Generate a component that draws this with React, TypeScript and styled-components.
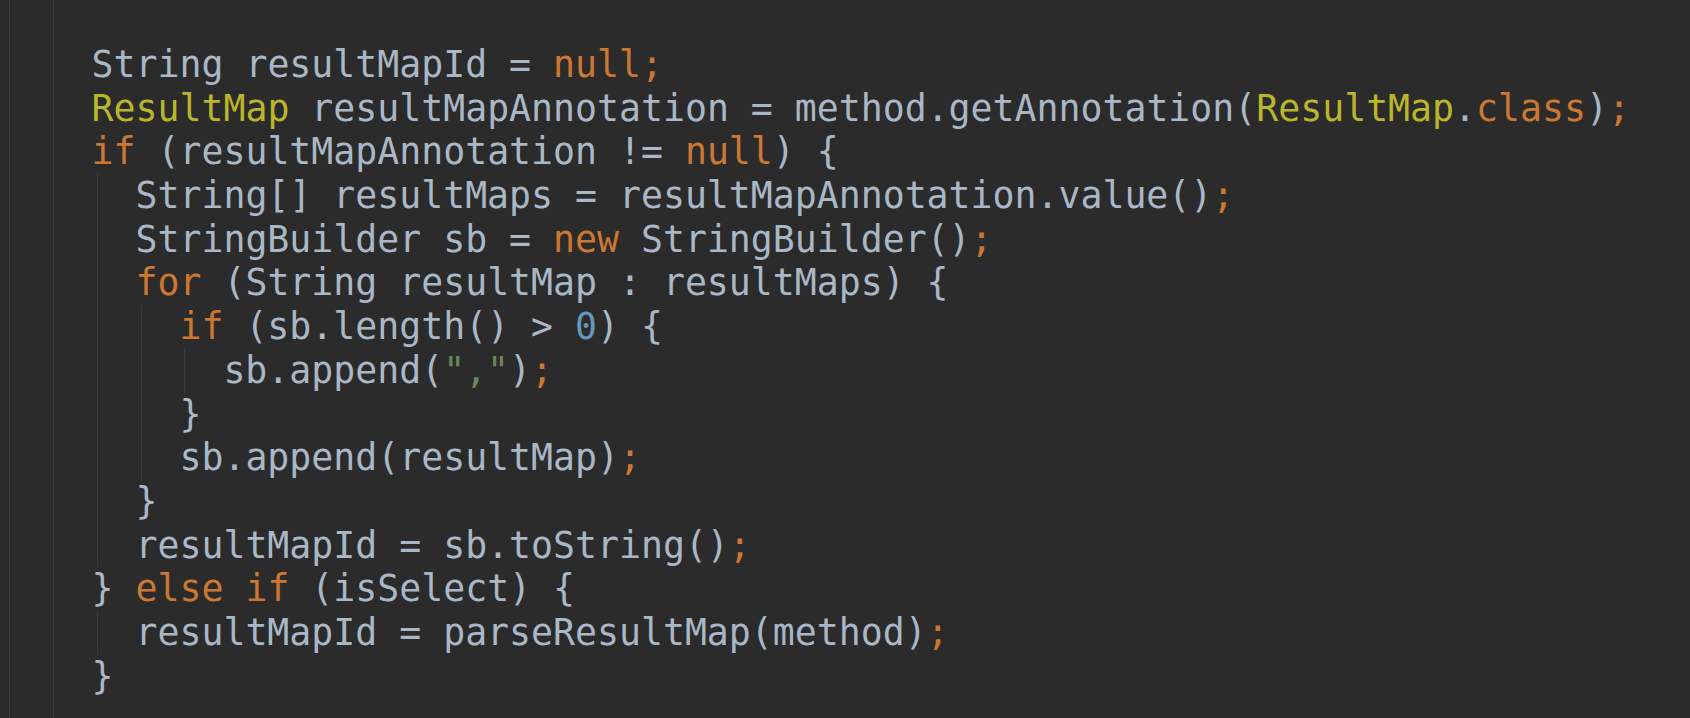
import React from "react";
import styled, { createGlobalStyle } from "styled-components";

const Global = createGlobalStyle`
  html, body { margin: 0; padding: 0; background: #2b2b2b; }
  #root { min-height: 100vh; }
`;

type Kind = "plain" | "kw" | "type" | "num" | "str";

const COLORS: Record<Kind, string> = {
  plain: "#a9b7c6",
  kw: "#cc7832",
  type: "#bbb529",
  num: "#6897bb",
  str: "#6a8759",
};

const GUIDE = "#3b3b3b";

const Editor = styled.div`
  box-sizing: border-box;
  height: 718px;
  overflow: hidden;
  padding: 43px 0 0 3.7px;
  display: flex;
  flex-direction: column;
  font-family: "DejaVu Sans Mono", "Liberation Mono", monospace;
  font-size: 36.5px;
  line-height: 43.7px;
  color: ${COLORS.plain};
  background:
    linear-gradient(${GUIDE}, ${GUIDE}) no-repeat 8.7px 0 / 1px 100%,
    linear-gradient(${GUIDE}, ${GUIDE}) no-repeat 52.7px 0 / 1px 100%,
    #2b2b2b;
`;

const Line = styled.div`
  display: flex;
  height: 43.7px;
  white-space: pre;
`;

const Margin = styled.span`
  width: 4ch;
  flex: none;
`;

const Indent = styled.span`
  width: 2ch;
  flex: none;
  background: linear-gradient(${GUIDE}, ${GUIDE}) no-repeat 5px 0 / 1px 100%;
`;

const Token = styled.span<{ $kind: Kind }>`
  color: ${(p) => COLORS[p.$kind]};
`;

type Tok = [string, Kind];
type Row = { indent: number; toks: Tok[] };

const p = (s: string): Tok => [s, "plain"];
const k = (s: string): Tok => [s, "kw"];
const t = (s: string): Tok => [s, "type"];
const n = (s: string): Tok => [s, "num"];
const str = (s: string): Tok => [s, "str"];

const rows: Row[] = [
  { indent: 0, toks: [p("String resultMapId = "), k("null;")] },
  {
    indent: 0,
    toks: [
      t("ResultMap"),
      p(" resultMapAnnotation = method.getAnnotation("),
      t("ResultMap"),
      p("."),
      k("class"),
      p(")"),
      k(";"),
    ],
  },
  { indent: 0, toks: [k("if"), p(" (resultMapAnnotation != "), k("null"), p(") {")] },
  { indent: 1, toks: [p("String[] resultMaps = resultMapAnnotation.value()"), k(";")] },
  { indent: 1, toks: [p("StringBuilder sb = "), k("new"), p(" StringBuilder()"), k(";")] },
  { indent: 1, toks: [k("for"), p(" (String resultMap : resultMaps) {")] },
  { indent: 2, toks: [k("if"), p(" (sb.length() > "), n("0"), p(") {")] },
  { indent: 3, toks: [p("sb.append("), str('","'), p(")"), k(";")] },
  { indent: 2, toks: [p("}")] },
  { indent: 2, toks: [p("sb.append(resultMap)"), k(";")] },
  { indent: 1, toks: [p("}")] },
  { indent: 1, toks: [p("resultMapId = sb.toString()"), k(";")] },
  { indent: 0, toks: [p("} "), k("else"), p(" "), k("if"), p(" (isSelect) {")] },
  { indent: 1, toks: [p("resultMapId = parseResultMap(method)"), k(";")] },
  { indent: 0, toks: [p("}")] },
];

export default function App() {
  return (
    <>
      <Global />
      <Editor>
        {rows.map((row, i) => (
          <Line key={i}>
            <Margin />
            {Array.from({ length: row.indent }).map((_, j) => (
              <Indent key={j} />
            ))}
            <span>
              {row.toks.map(([text, kind], j) => (
                <Token key={j} $kind={kind}>
                  {text}
                </Token>
              ))}
            </span>
          </Line>
        ))}
      </Editor>
    </>
  );
}
